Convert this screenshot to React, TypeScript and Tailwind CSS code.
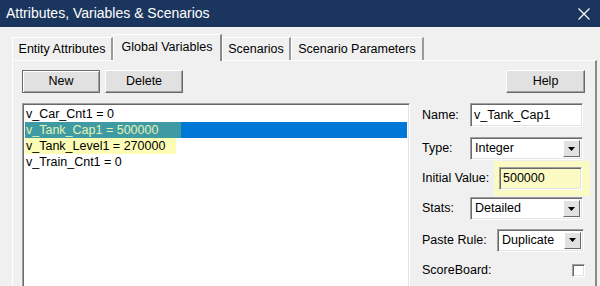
import React from "react";

const sunken =
  "border border-t-[#a0a0a0] border-l-[#a0a0a0] border-b-white border-r-white shadow-[inset_1px_1px_0_#696969,inset_-1px_-1px_0_#e3e3e3]";

function Btn({ label, width, isDefault }: { label: string; width: string; isDefault?: boolean }) {
  const edge = isDefault
    ? "border border-[#6a6a6a] shadow-[inset_1px_1px_0_#ffffff,inset_-1px_-1px_0_#a0a0a0]"
    : "border border-t-white border-l-white border-b-[#696969] border-r-[#696969] shadow-[inset_-1px_-1px_0_#a0a0a0]";
  return (
    <div className={`${width} h-[23px] bg-[#e1e1e1] ${edge} flex items-center justify-center`}>
      {label}
    </div>
  );
}

function Combo({ value, width }: { value: string; width: string }) {
  return (
    <div className={`${width} h-[23px] bg-white ${sunken} flex items-stretch p-[2px]`}>
      <div className="flex-1 pl-[2px] flex items-center text-black">{value}</div>
      <div className="w-[17px] bg-[#e1e1e1] border border-t-white border-l-white border-b-[#696969] border-r-[#696969] flex items-center justify-center">
        <svg width="7" height="4" viewBox="0 0 7 4">
          <path d="M0 0h7L3.5 4z" fill="#000" />
        </svg>
      </div>
    </div>
  );
}

export default function App() {
  const tabs = [
    { name: "Entity Attributes", w: "w-[101px]" },
    { name: "Global Variables", w: "w-[109px]", active: true },
    { name: "Scenarios", w: "w-[69px]" },
    { name: "Scenario Parameters", w: "w-[133px]" },
  ];

  return (
    <div className="w-[600px] h-[286px] overflow-hidden bg-[#f0f0f0] text-[12.5px] text-black font-['Liberation_Sans',Arial,sans-serif]">
      {/* title bar */}
      <div className="h-[27px] bg-[#1b365e] flex items-center justify-between pl-[6px] pr-[10px] text-white text-[14px]">
        <span>Attributes, Variables &amp; Scenarios</span>
        <svg width="12" height="12" viewBox="0 0 12 12">
          <path d="M0.5 0.5L11.5 11.5M11.5 0.5L0.5 11.5" stroke="#fff" strokeWidth="1.2" />
        </svg>
      </div>

      <div className="pl-[12px] pr-[3px] pt-[6px]">
        {/* tabs */}
        <div className="flex items-end h-[27px]">
          {tabs.map((t) =>
            t.active ? (
              <div
                key={t.name}
                className={`${t.w} h-[27px] bg-[#f0f0f0] border-t border-l border-t-white border-l-white border-r-2 border-r-[#8a8a8a] flex items-center justify-center pb-[2px] relative z-10 -mb-px`}
              >
                {t.name}
              </div>
            ) : (
              <div
                key={t.name}
                className={`${t.w} h-[23px] bg-[#f0f0f0] border-t border-l border-t-white border-l-white border-r-2 border-r-[#9a9a9a] flex items-center justify-center`}
              >
                {t.name}
              </div>
            )
          )}
        </div>

        {/* panel */}
        <div className="h-[240px] border-t border-l border-t-white border-l-white border-r-2 border-r-[#8a8a8a] flex flex-col">
          <div className="flex mt-[9px] pl-[9px] pr-[10px]">
            <Btn label="New" width="w-[78px]" isDefault />
            <div className="ml-[5px]">
              <Btn label="Delete" width="w-[78px]" />
            </div>
            <div className="ml-auto">
              <Btn label="Help" width="w-[79px]" />
            </div>
          </div>

          <div className="flex mt-[10px] pl-[9px]">
            {/* list box */}
            <div className={`w-[388px] h-[200px] bg-white ${sunken} pt-[2px] px-[2px]`}>
              <div className="h-[16px] leading-[16px] pl-[1px]">v_Car_Cnt1 = 0</div>
              <div className="h-[16px] bg-[#0078d7]">
                <div className="w-[156px] h-[16px] leading-[16px] pl-[1px] bg-[#3f9ba3] text-[#e4f2b4]">
                  v_Tank_Cap1 = 500000
                </div>
              </div>
              <div className="w-[151px] h-[16px] leading-[16px] pl-[1px] bg-[#fcfcb6]">v_Tank_Level1 = 270000</div>
              <div className="h-[16px] leading-[16px] pl-[1px]">v_Train_Cnt1 = 0</div>
            </div>

            {/* form */}
            <div className="ml-[12px] w-[168px] flex flex-col">
              <div className="flex items-center h-[24px]">
                <span className="w-[48px]">Name:</span>
                <div className={`w-[113px] h-[24px] bg-white ${sunken} flex items-center pl-[3px]`}>v_Tank_Cap1</div>
              </div>
              <div className="flex items-center h-[23px] mt-[10px]">
                <span className="w-[48px]">Type:</span>
                <Combo value="Integer" width="w-[113px]" />
              </div>
              <div className="flex items-center h-[35px] mt-[1px]">
                <span className="w-[72px]">Initial Value:</span>
                <div className="w-[96px] h-[35px] bg-[#fafac2] flex items-center pl-[5px] pr-[8px]">
                  <div className={`w-full h-[23px] bg-[#fafac2] ${sunken} flex items-center pl-[3px]`}>500000</div>
                </div>
              </div>
              <div className="flex items-center h-[23px] mt-[1px]">
                <span className="w-[48px]">Stats:</span>
                <Combo value="Detailed" width="w-[113px]" />
              </div>
              <div className="flex items-center h-[24px] mt-[8px]">
                <span className="w-[75px]">Paste Rule:</span>
                <Combo value="Duplicate" width="w-[87px]" />
              </div>
              <div className="flex items-center h-[14px] mt-[11px]">
                <span className="w-[150px]">ScoreBoard:</span>
                <div className={`w-[13px] h-[13px] bg-white ${sunken}`} />
              </div>
            </div>
          </div>
        </div>
      </div>
    </div>
  );
}
